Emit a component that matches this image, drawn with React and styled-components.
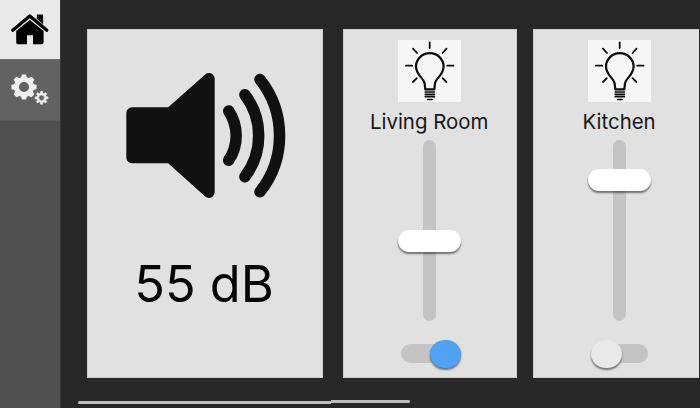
import React from "react";
import styled, { createGlobalStyle } from "styled-components";

const GlobalStyle = createGlobalStyle`
  * { box-sizing: border-box; }
  body { margin: 0; background: #282828; overflow: hidden; }
`;

const Screen = styled.div`
  display: flex;
  width: 700px;
  height: 408px;
  background: #282828;
  overflow: hidden;
  color: #050505;
  font-family: Inter, "Liberation Sans", sans-serif;
`;

const Sidebar = styled.nav`
  flex: none;
  width: 61px;
  background: #505050;
  border-right: 1px solid #3a3a3a;
`;

const NavButton = styled.button`
  display: block;
  width: 60px;
  height: ${(p) => (p.$active ? 60 : 61)}px;
  padding: 0;
  border: 0;
  border-bottom: ${(p) => (p.$active ? "1px solid #6c6c6c" : "1px solid #595959")};
  background: ${(p) => (p.$active ? "#e9e9e9" : "#626262")};
  svg { display: block; }
`;

const Main = styled.main`
  flex: 1;
  min-width: 0;
  padding: 29px 1px 0 26px;
  display: flex;
  flex-direction: column;
`;

const Cards = styled.div`
  display: flex;
  height: 349px;
  overflow: hidden;
`;

const Card = styled.section`
  flex: none;
  display: flex;
  flex-direction: column;
  align-items: center;
  width: ${(p) => p.$width}px;
  margin-right: ${(p) => p.$gap || 0}px;
  background: #e1e1e1;
  box-shadow: inset 0 0 0 1px #cdcdcd;
`;

const SpeakerIcon = styled.svg`
  display: block;
  flex: none;
  margin: 39px 0 0 2px;
`;

const Level = styled.div`
  margin-top: 52px;
  margin-left: -2px;
  font-size: 50.5px;
  line-height: 60px;
  white-space: pre;
`;

const BulbTile = styled.div`
  flex: none;
  width: 63px;
  height: 62px;
  margin-top: 11px;
  background: #f6f6f6;
  svg { display: block; }
`;

const RoomName = styled.div`
  margin-top: 7px;
  font-size: 20.4px;
  line-height: 26px;
  color: #161616;
  white-space: nowrap;
`;

const SliderTrack = styled.div`
  flex: none;
  width: 13px;
  height: 181px;
  margin-top: 5px;
  padding-top: ${(p) => p.$offset}px;
  border-radius: 7px;
  background: #c4c4c4;
`;

const SliderThumb = styled.div`
  width: 63px;
  height: 22px;
  margin-left: -25px;
  border-radius: 11px;
  background: #fff;
  box-shadow: 0 2px 2px rgba(0, 0, 0, 0.5);
`;

const Toggle = styled.div`
  flex: none;
  display: flex;
  align-items: center;
  justify-content: ${(p) => (p.$on ? "flex-end" : "flex-start")};
  width: 57px;
  height: 19px;
  margin-top: 23px;
  border-radius: 10px;
  background: #c4c4c4;
`;

const Knob = styled.div`
  flex: none;
  width: 31px;
  height: 28px;
  margin-right: ${(p) => (p.$on ? -3 : 0)}px;
  border-radius: 15px / 14px;
  background: ${(p) => (p.$on ? "#50a2f2" : "#e9e9e9")};
  box-shadow: 0 2px 2px rgba(0, 0, 0, 0.5);
`;

const RoomColumn = styled.div`
  flex: none;
  display: flex;
  flex-direction: column;
  align-items: center;
  margin-right: 2px;
`;

const ScrollBar = styled.div`
  display: flex;
  margin-top: 22px;
  margin-left: -9px;
  width: 332px;
`;

const ScrollPart = styled.div`
  width: ${(p) => p.$width}px;
  height: 3px;
  margin-top: ${(p) => p.$drop}px;
  border-radius: ${(p) => p.$radius};
  background: #bfc0be;
`;

function gearPath(cx, cy, outer, root, hole) {
  const pts = [];
  for (let i = 0; i < 8; i++) {
    const a = (i * Math.PI) / 4;
    [[-0.24, root], [-0.14, outer], [0.14, outer], [0.24, root]].forEach(([d, r]) => {
      pts.push(`${(cx + r * Math.sin(a + d)).toFixed(2)} ${(cy - r * Math.cos(a + d)).toFixed(2)}`);
    });
  }
  return `M${pts.join("L")}ZM${cx - hole} ${cy}a${hole} ${hole} 0 1 0 ${2 * hole} 0a${hole} ${hole} 0 1 0 ${-2 * hole} 0Z`;
}

const HomeIcon = () => (
  <svg width="60" height="59" viewBox="0 0 60 59">
    <path d="M36.8 14.5h6.3v10l-6.3-5.8Z" fill="#000" />
    <path d="M12.8 30.2 29.8 16 46.8 30.2" fill="none" stroke="#000" strokeWidth="3.3" strokeLinecap="round" strokeLinejoin="round" />
    <path d="M16.2 31 29.8 19.9 43.6 31V42.5Q43.6 44.3 41.8 44.3H33V35.2H27V44.3H18Q16.2 44.3 16.2 42.5Z" fill="#000" />
  </svg>
);

const GearsIcon = () => (
  <svg width="60" height="60" viewBox="0 60 60 60">
    <g fill="#eee" stroke="#eee" strokeLinejoin="round" fillRule="evenodd">
      <path d={gearPath(24, 87, 12.1, 9.7, 5.7)} strokeWidth="1.2" />
      <path d={gearPath(41.6, 97.8, 6.5, 4.7, 2.9)} strokeWidth="0.7" />
    </g>
  </svg>
);

const Speaker = () => (
  <SpeakerIcon width="160" height="134" viewBox="126 68 160 134">
    <path d="M132 113H170.3L209 78.8V192.2L170.3 157.5H132Z" fill="#111" stroke="#111" strokeWidth="11.4" strokeLinejoin="round" />
    <g fill="none" stroke="#111" strokeWidth="11.5" strokeLinecap="round">
      <path d="M228.7 111A44.4 44.4 0 0 1 228.7 160.3" />
      <path d="M244.9 94.7A67.8 67.8 0 0 1 244.9 176.7" />
      <path d="M260 79.5A90.4 90.4 0 0 1 260 191.8" />
    </g>
  </SpeakerIcon>
);

const Bulb = () => (
  <BulbTile>
    <svg width="63" height="62" viewBox="0 0 63 62" fill="none" stroke="#0c0c0c" strokeWidth="1.8" strokeLinecap="round">
      <path d="M31.7 2.3V8M8 25.7H14.2M49.2 25.7H55.5M15 8.7L19 13M48.5 8.7L44.6 13M15 42L18.8 38.2M48.4 42L44.6 38.2" />
      <path strokeWidth="2.2" strokeLinejoin="round" d="M27.3 49.3L26.6 43.2C25.8 37.8 18 35.5 18 26.5A13.8 13.3 0 0 1 45.6 26.5C45.6 35.5 37.8 37.8 37 43.2L36.3 49.3Z" />
      <path strokeWidth="1.7" d="M27.3 52H36.4M27.3 54.3H36.4M27.3 56.7H36.4M29.8 59.5H34" />
    </svg>
  </BulbTile>
);

const Room = ({ name, width, gap, offset, on }) => (
  <Card $width={width} $gap={gap}>
    <RoomColumn>
      <Bulb />
      <RoomName>{name}</RoomName>
      <SliderTrack $offset={offset}>
        <SliderThumb />
      </SliderTrack>
      <Toggle $on={on}>
        <Knob $on={on} />
      </Toggle>
    </RoomColumn>
  </Card>
);

export default function App() {
  return (
    <Screen>
      <GlobalStyle />
      <Sidebar>
        <NavButton $active aria-label="Home"><HomeIcon /></NavButton>
        <NavButton aria-label="Settings"><GearsIcon /></NavButton>
      </Sidebar>
      <Main>
        <Cards>
          <Card $width={236} $gap={20.4}>
            <Speaker />
            <Level>55 dB</Level>
          </Card>
          <Room name="Living Room" width={173.5} gap={16.5} offset={90} on />
          <Room name="Kitchen" width={173.5} offset={29} />
        </Cards>
        <ScrollBar>
          <ScrollPart $width={253} $drop={0.5} $radius="2px 0 0 2px" />
          <ScrollPart $width={79} $drop={0} $radius="0 2px 2px 0" />
        </ScrollBar>
      </Main>
    </Screen>
  );
}
